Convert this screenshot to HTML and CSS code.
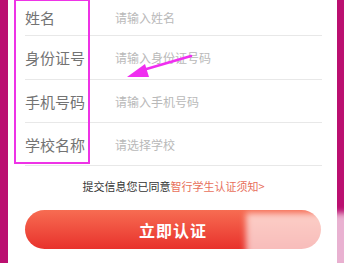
FILE: index.html
```html
<!DOCTYPE html>
<html>
<head>
<meta charset="utf-8">
<link rel="stylesheet" href="styles.css">
</head>
<body>
<div class="frame">
  <div class="card">
    <div class="form">
      <div class="row"><span class="label">姓名</span><span class="ph">请输入姓名</span></div>
      <div class="row tall"><span class="label">身份证号</span><span class="ph">请输入身份证号码</span></div>
      <div class="row"><span class="label">手机号码</span><span class="ph">请输入手机号码</span></div>
      <div class="row"><span class="label">学校名称</span><span class="ph">请选择学校</span></div>
    </div>
    <p class="agree">提交信息您已同意<span class="link">智行学生认证须知&gt;</span></p>
    <div class="btnwrap"><button class="btn">立即认证</button></div>
    <div class="highlight"></div>
    <svg class="arrow" width="80" height="36" viewBox="0 0 80 36">
      <path d="M22 20 L70 6" stroke="#f02ef0" stroke-width="2.5" stroke-linecap="round" fill="none"/>
      <path d="M6 27 L24 14 L28 27 Z" fill="#f02ef0"/>
    </svg>
    <div class="wm"></div>
  </div>
</div>
</body>
</html>
```
FILE: styles.css
```css
html, body { margin: 0; padding: 0; }
body {
  width: 344px; height: 263px; overflow: hidden;
  background: #bb0f70;
  font-family: "Noto Sans CJK SC", "Noto Sans", sans-serif;
}
.frame { padding: 0 7px 0 8px; height: 263px; }
.card {
  position: relative; background: #fff; height: 263px;
  padding: 0 15px 0 17px; box-sizing: border-box;
}
.form { display: flex; flex-direction: column; }
.row {
  height: 43px; display: flex; align-items: center;
  border-bottom: 1px solid #e8e8e8; box-sizing: border-box;
}
.row:first-child { height: 36px; }
.row.tall { height: 44px; }
.label { width: 90px; font-size: 15px; color: #737373; }
.ph { font-size: 12px; color: #b9b9b9; }
.agree {
  margin: 12px 0 0; text-align: center; font-size: 11px; color: #333;
  line-height: 16px;
}
.link { color: #e8705c; }
.btnwrap { margin-top: 16px; padding-right: 1px; }
.btn {
  width: 100%; height: 39px; border: 0; border-radius: 20px;
  background: linear-gradient(#f76c52, #e8322c);
  color: #fff; font-size: 16px; font-weight: bold; letter-spacing: 1px;
  font-family: "Noto Sans CJK SC", sans-serif;
}
.highlight {
  position: absolute; left: 6px; top: -1px; width: 72px; height: 161px;
  border: 2px solid #ee33e6;
}
.arrow { position: absolute; left: 113px; top: 50px; }
.wm {
  position: absolute; left: 238px; top: 213px; width: 112px; height: 56px;
  background: rgba(255,255,255,0.68); filter: blur(3px);
}
```
